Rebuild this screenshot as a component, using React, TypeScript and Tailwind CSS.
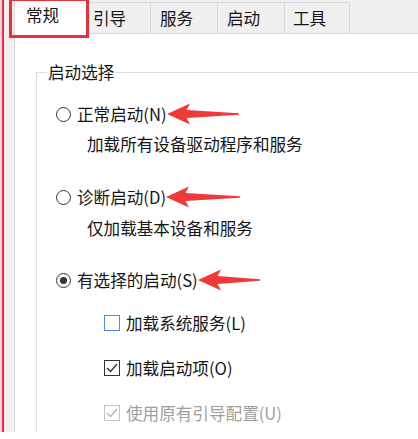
import React from 'react';

const font = { fontFamily: '"Noto Sans CJK SC", "Microsoft YaHei", "Noto Sans", sans-serif' };

function Arrow({ width }: { width: number }) {
  return (
    <svg width={width} height="22" viewBox={`0 0 ${width} 22`} className="shrink-0">
      <polygon
        points={`0,11 23,0.5 19.5,7 ${width},10.2 ${width},11.8 19.5,15 23,21.5`}
        fill="#f03a3a"
      />
    </svg>
  );
}

function Radio({ checked }: { checked?: boolean }) {
  return (
    <span className="w-[15px] h-[15px] rounded-full border border-[#333] bg-white flex items-center justify-center shrink-0">
      {checked && <span className="w-[7px] h-[7px] rounded-full bg-[#333]" />}
    </span>
  );
}

function Check({ state }: { state: 'off' | 'on' | 'disabled' }) {
  const border = state === 'off' ? 'border-[#4a90d9]' : state === 'on' ? 'border-[#333]' : 'border-[#c4c4c4]';
  const stroke = state === 'on' ? '#333' : '#b8b8b8';
  return (
    <span className={`w-[16px] h-[16px] border ${border} bg-white flex items-center justify-center shrink-0`}>
      {state !== 'off' && (
        <svg width="14" height="14" viewBox="0 0 14 14">
          <polyline points="2,7 5.5,10.5 12,3" fill="none" stroke={stroke} strokeWidth="1.4" />
        </svg>
      )}
    </span>
  );
}

const tabs = [
  { label: '引导', w: 'w-[63px]', pl: 'pl-[5px]' },
  { label: '服务', w: 'w-[67px]', pl: 'pl-[9px]' },
  { label: '启动', w: 'w-[67px]', pl: 'pl-[9px]' },
  { label: '工具', w: 'w-[65px]', pl: 'pl-[8px]' },
];

export default function App() {
  return (
    <div className="relative w-[418px] h-[439px] bg-white overflow-hidden text-[16.6px] text-[#151515]" style={font}>
      <div className="flex h-[432px]">
        {/* left strip */}
        <div className="flex h-full w-[15px] shrink-0 border-r border-[#d6d6d6]">
          <div className="w-[2px] bg-[#f3d3d9]" />
          <div className="w-[2px] bg-[#e5324c]" />
          <div className="flex-1 bg-[#f6eff1]" />
        </div>

        <div className="flex flex-col flex-1 min-w-0">
          {/* tab strip */}
          <div className="flex items-end h-[34px] bg-[#f0f0f0] border-b border-[#d9d9d9] shrink-0">
            <div className="w-[73px] h-[35px] -mb-px bg-white flex items-center pl-[11px] pb-[2px] leading-none">常规</div>
            {tabs.map(t => (
              <div
                key={t.label}
                className={`${t.w} ${t.pl} h-[31px] bg-[#f0f0f0] border-t border-r border-[#d9d9d9] flex items-center leading-none`}
              >
                {t.label}
              </div>
            ))}
          </div>

          {/* tab page */}
          <div className="flex-1 pl-[21px] pt-[38px] overflow-hidden">
            <div className="relative w-[420px] h-full border-l border-t border-[#dcdcdc] pl-[19px]">
              <span className="absolute left-[10px] -top-[12px] bg-white px-[1px] leading-[22px]">启动选择</span>

              <div className="flex items-center h-[24px] mt-[29px] leading-none">
                <Radio />
                <span className="ml-[6px]">正常启动(N)</span>
                <Arrow width={72} />
              </div>
              <div className="flex items-center h-[24px] mt-[6px] ml-[31px] leading-none">加载所有设备驱动程序和服务</div>

              <div className="flex items-center h-[24px] mt-[29px] leading-none">
                <Radio />
                <span className="ml-[6px]">诊断启动(D)</span>
                <Arrow width={74} />
              </div>
              <div className="flex items-center h-[24px] mt-[7px] ml-[31px] leading-none">仅加载基本设备和服务</div>

              <div className="flex items-center h-[24px] mt-[28px] leading-none">
                <Radio checked />
                <span className="ml-[6px]">有选择的启动(S)</span>
                <Arrow width={62} />
              </div>

              <div className="flex items-center h-[24px] mt-[19px] ml-[48px] leading-none">
                <Check state="off" />
                <span className="ml-[6px]">加载系统服务(L)</span>
              </div>
              <div className="flex items-center h-[24px] mt-[21px] ml-[48px] leading-none">
                <Check state="on" />
                <span className="ml-[6px]">加载启动项(O)</span>
              </div>
              <div className="flex items-center h-[24px] mt-[21px] ml-[48px] leading-none text-[#9e9e9e]">
                <Check state="disabled" />
                <span className="ml-[6px]">使用原有引导配置(U)</span>
              </div>
            </div>
          </div>
        </div>
      </div>

      {/* red highlight around the selected tab */}
      <div className="absolute left-[9px] -top-[2px] w-[80px] h-[40px] border-[3px] border-[#e8303c]" />
    </div>
  );
}
